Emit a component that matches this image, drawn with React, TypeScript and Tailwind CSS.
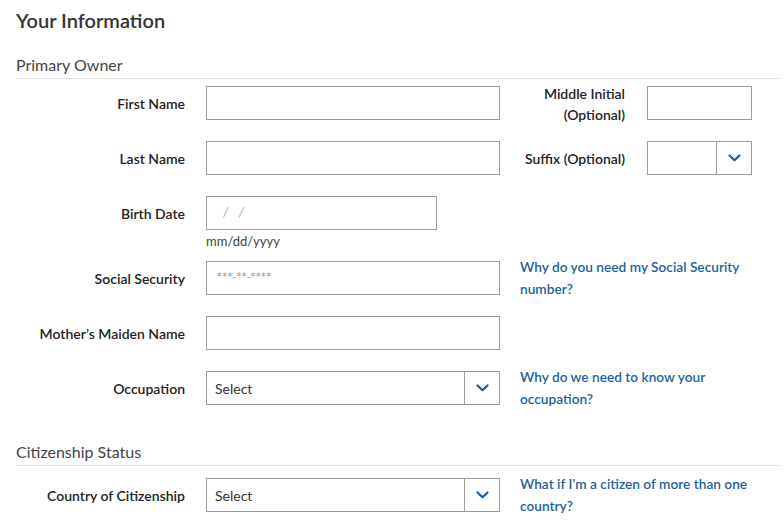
import React from "react";

const Chevron = () => (
  <svg width="13" height="8" viewBox="0 0 13 8" fill="none">
    <path d="M1.5 1.5L6.5 6.2L11.5 1.5" stroke="#1f5a96" strokeWidth="2.2" strokeLinecap="round" strokeLinejoin="round" />
  </svg>
);

const Label = ({ children, w = "w-[169px]" }: { children: React.ReactNode; w?: string }) => (
  <div className={`${w} h-[34px] flex items-center justify-end text-right text-[14px] font-semibold text-[#222] leading-[21px] shrink-0`}>
    <div>{children}</div>
  </div>
);

const TextBox = ({ w = "w-[294px]", children }: { w?: string; children?: React.ReactNode }) => (
  <div className={`${w} h-[34px] border border-[#9c9c9c] bg-white shrink-0 flex items-center`}>{children}</div>
);

const SelectBox = ({ w = "w-[294px]", text }: { w?: string; text?: string }) => (
  <div className={`${w} h-[34px] border border-[#9c9c9c] bg-white shrink-0 flex`}>
    <div className="flex-1 flex items-center pl-[8px] text-[14px] text-[#333]">{text}</div>
    <div className="w-[35px] border-l border-[#9c9c9c] flex items-center justify-center">
      <Chevron />
    </div>
  </div>
);

const HelpLink = ({ children }: { children: React.ReactNode }) => (
  <div className="ml-[20px] h-[34px] w-[245px]">
    <div className="mt-[-5px] text-[13.7px] font-semibold leading-[22px] text-[#1f5f9e]">{children}</div>
  </div>
);

export default function App() {
  return (
    <div className="w-[784px] h-[523px] bg-white overflow-hidden pl-[16px] pr-[4px]" style={{ fontFamily: "Lato, 'Open Sans', sans-serif" }}>
      <h1 className="pt-[6px] text-[20px] leading-[28px] font-semibold text-[#333]">Your Information</h1>

      <div className="mt-[19px] text-[16px] leading-[24px] text-[#444] pb-[1px] border-b border-[#e3e3e3]">Primary Owner</div>

      {/* First Name / Middle Initial */}
      <div className="mt-[7px] flex items-start">
        <Label>First Name</Label>
        <div className="ml-[21px]"><TextBox /></div>
        <Label w="w-[125px]">
          <div className="mt-[2px]">
            Middle Initial
            <br />
            (Optional)
          </div>
        </Label>
        <div className="ml-[22px]"><TextBox w="w-[105px]" /></div>
      </div>

      {/* Last Name / Suffix */}
      <div className="mt-[21px] flex items-start">
        <Label>Last Name</Label>
        <div className="ml-[21px]"><TextBox /></div>
        <Label w="w-[125px]">Suffix (Optional)</Label>
        <div className="ml-[22px]"><SelectBox w="w-[105px]" /></div>
      </div>

      {/* Birth Date */}
      <div className="mt-[21px] flex items-start">
        <Label>Birth Date</Label>
        <div className="ml-[21px]">
          <TextBox w="w-[231px]">
            <div className="pl-[16px] flex gap-[10px] text-[13px] text-[#aaa] italic">
              <span>/</span>
              <span>/</span>
            </div>
          </TextBox>
          <div className="mt-[2px] text-[13px] leading-[18px] text-[#444]">mm/dd/yyyy</div>
        </div>
      </div>

      {/* Social Security */}
      <div className="mt-[11px] flex items-start">
        <Label>Social Security</Label>
        <div className="ml-[21px]">
          <TextBox>
            <div
              className="pl-[10px] pb-[3px] text-[10px] tracking-[0.2px] text-[#999]"
              style={{ fontFamily: "'DejaVu Sans', sans-serif" }}
            >
              ***-**-****
            </div>
          </TextBox>
        </div>
        <HelpLink>Why do you need my Social Security number?</HelpLink>
      </div>

      {/* Mother's Maiden Name */}
      <div className="mt-[21px] flex items-start">
        <Label>Mother’s Maiden Name</Label>
        <div className="ml-[21px]"><TextBox /></div>
      </div>

      {/* Occupation */}
      <div className="mt-[21px] flex items-start">
        <Label>Occupation</Label>
        <div className="ml-[21px]"><SelectBox text="Select" /></div>
        <HelpLink>Why do we need to know your occupation?</HelpLink>
      </div>

      <div className="mt-[35px] text-[16px] leading-[24px] text-[#444] pb-[1px] border-b border-[#e3e3e3]">Citizenship Status</div>

      {/* Country of Citizenship */}
      <div className="mt-[12px] flex items-start">
        <Label>Country of Citizenship</Label>
        <div className="ml-[21px]"><SelectBox text="Select" /></div>
        <HelpLink>What if I'm a citizen of more than one country?</HelpLink>
      </div>
    </div>
  );
}
